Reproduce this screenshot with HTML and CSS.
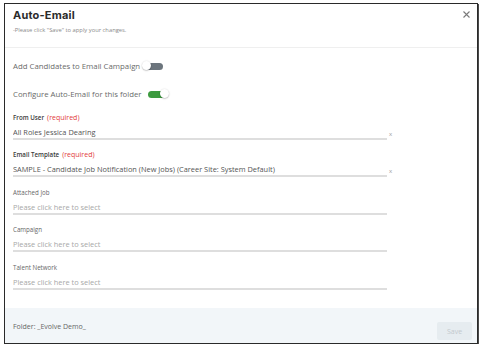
FILE: index.html
```html
<!DOCTYPE html>
<html>
<head>
<meta charset="utf-8">
<link rel="stylesheet" href="styles.css">
</head>
<body>
<div class="dialog">
  <div class="header">
    <div class="titles">
      <div class="title">Auto-Email</div>
      <div class="subtitle">-Please click "Save" to apply your changes.</div>
    </div>
    <button class="close" aria-label="Close">
      <svg width="7" height="7" viewBox="0 0 7 7"><path d="M0.5 0.5 L6.5 6.5 M6.5 0.5 L0.5 6.5" stroke="#7a7a7a" stroke-width="1.1" fill="none"/></svg>
    </button>
  </div>
  <div class="body">
    <div class="switch-row first">
      <span class="switch-label">Add Candidates to Email Campaign</span>
      <span class="toggle off"></span>
    </div>
    <div class="switch-row second">
      <span class="switch-label">Configure Auto-Email for this folder</span>
      <span class="toggle on"></span>
    </div>
    <div class="field">
      <div class="label strong">From User <span class="req">(required)</span></div>
      <div class="input-row">
        <div class="input value">All Roles Jessica Dearing</div>
        <span class="clear">x</span>
      </div>
    </div>
    <div class="field">
      <div class="label strong">Email Template <span class="req">(required)</span></div>
      <div class="input-row">
        <div class="input value">SAMPLE - Candidate Job Notification (New Jobs) (Career Site: System Default)</div>
        <span class="clear">x</span>
      </div>
    </div>
    <div class="field">
      <div class="label">Attached Job</div>
      <div class="input-row">
        <div class="input placeholder">Please click here to select</div>
      </div>
    </div>
    <div class="field">
      <div class="label">Campaign</div>
      <div class="input-row">
        <div class="input placeholder">Please click here to select</div>
      </div>
    </div>
    <div class="field">
      <div class="label">Talent Network</div>
      <div class="input-row">
        <div class="input placeholder">Please click here to select</div>
      </div>
    </div>
  </div>
  <div class="footer">
    <div class="folder">Folder: _Evolve Demo_</div>
    <button class="save">Save</button>
  </div>
</div>
</body>
</html>
```

FILE: styles.css
```css
* { box-sizing: border-box; }
html, body { margin: 0; padding: 0; background: #fff; }
body { font-family: "Open Sans", "Liberation Sans", sans-serif; }

.dialog {
  margin: 3px 0 0 4px;
  width: 474px;
  height: 341px;
  border: 1px solid #2a2a2a;
  box-shadow: 1px 1px 0 #4a4a4a;
  display: flex;
  flex-direction: column;
  background: #fff;
}

.header {
  display: flex;
  justify-content: space-between;
  padding: 4px 7px 12px 8px;
  border-bottom: 1px solid #efefef;
}
.title {
  font-family: "Inter", "Open Sans", sans-serif;
  font-weight: 700;
  font-size: 11px;
  line-height: 14px;
  color: #2b2b2b;
  letter-spacing: 0.2px;
}
.subtitle {
  margin-top: 4px;
  font-size: 5.8px;
  line-height: 9px;
  color: #8a8a8a;
}
.close {
  margin-top: 3px;
  padding: 0;
  border: 0;
  background: none;
  width: 7px;
  height: 7px;
  line-height: 0;
}

.body {
  flex: 1;
  padding: 12px 8px 0 8px;
}
.switch-row {
  display: flex;
  align-items: center;
  height: 12px;
  font-size: 7.8px;
  color: #6a6a6a;
}
.switch-row.second { margin-top: 16px; }
.switch-label { line-height: 12px; }

.toggle {
  position: relative;
  display: inline-block;
  width: 22px;
  height: 10px;
}
.toggle::before {
  content: "";
  position: absolute;
  top: 2px;
  height: 7px;
  border-radius: 4px;
}
.toggle::after {
  content: "";
  position: absolute;
  top: 0;
  width: 9px;
  height: 9px;
  border-radius: 50%;
  background: #fff;
  box-shadow: 0 0.5px 1.5px rgba(0,0,0,0.35);
}
.toggle.off { margin-left: 2px; }
.toggle.off::before { left: 3px; width: 18px; background: #6c757d; }
.toggle.off::after { left: 0; }
.toggle.on { margin-left: 6px; }
.toggle.on::before { left: 0; width: 17px; background: #3d9b40; }
.toggle.on::after { left: 12px; }

.field { margin-top: 10.5px; }
.switch-row.second + .field { margin-top: 12.5px; }
.label {
  display: flex;
  align-items: baseline;
  height: 9px;
  font-size: 6.2px;
  line-height: 9px;
  color: #666;
  margin-bottom: 4px;
}
.label.strong { font-weight: 600; color: #3a3a3a; }
.req {
  font-weight: 400;
  font-size: 7px;
  line-height: 9px;
  color: #e23b3b;
  margin-left: 3px;
}
.input-row {
  display: flex;
  align-items: flex-end;
}
.input {
  width: 374px;
  font-size: 7.4px;
  line-height: 12px;
  height: 14px;
  border-bottom: 2px solid #dedede;
  white-space: nowrap;
  overflow: hidden;
}
.value { color: #555; }
.placeholder { color: #a8a8a8; }
.clear {
  margin-left: 2px;
  margin-bottom: 3px;
  font-size: 6px;
  line-height: 6px;
  color: #999;
}

.footer {
  height: 35px;
  background: #f2f6f9;
  display: flex;
  justify-content: space-between;
  align-items: flex-start;
  padding: 14px 5px 3px 8px;
}
.folder {
  font-size: 7px;
  line-height: 10px;
  color: #666;
}
.save {
  width: 35px;
  height: 18px;
  border: 0;
  border-radius: 2px;
  background: #e6ecf0;
  color: #c3c9ce;
  font-family: "Open Sans", sans-serif;
  font-size: 7px;
  padding: 0;
}
```
